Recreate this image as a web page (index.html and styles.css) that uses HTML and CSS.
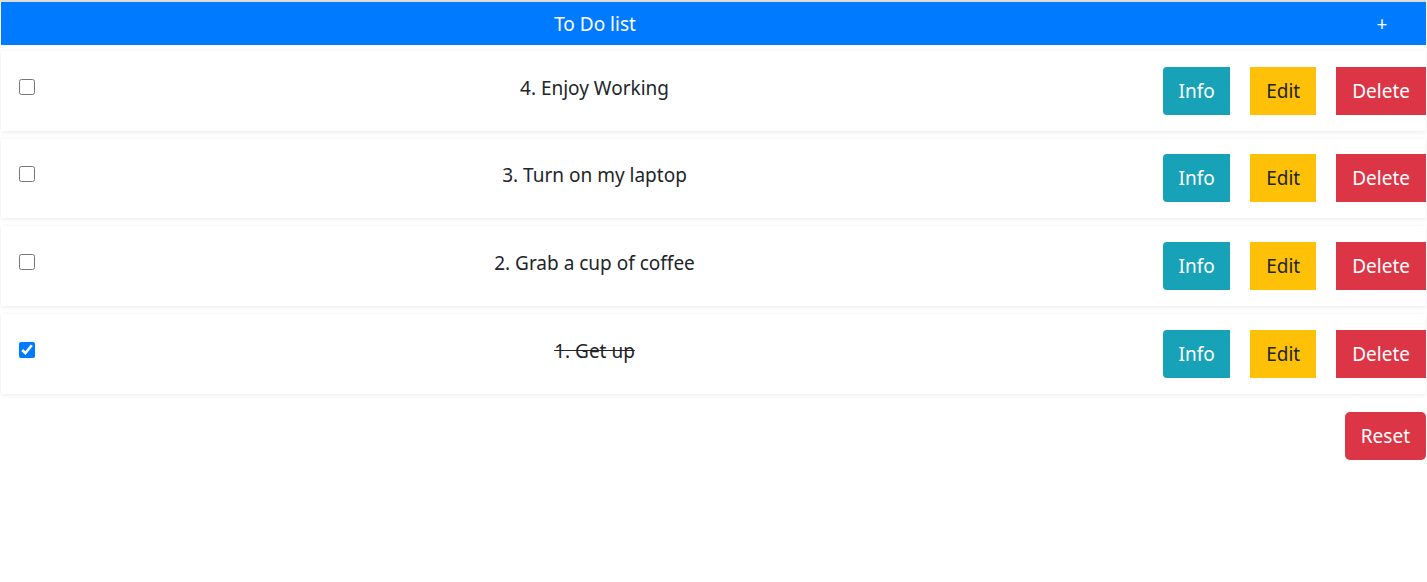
FILE: index.html
```html
<!DOCTYPE html>
<html>
<head>
<meta charset="utf-8">
<link rel="stylesheet" href="styles.css">
</head>
<body>
<div class="app">
  <div class="header">
    <div class="title">To Do list</div>
    <div class="add">+</div>
  </div>
  <div class="list">
    <div class="card">
      <div class="check"><input type="checkbox"></div>
      <div class="text">4. Enjoy Working</div>
      <div class="actions">
        <button class="btn info">Info</button>
        <button class="btn edit">Edit</button>
        <button class="btn del">Delete</button>
      </div>
    </div>
    <div class="card">
      <div class="check"><input type="checkbox"></div>
      <div class="text">3. Turn on my laptop</div>
      <div class="actions">
        <button class="btn info">Info</button>
        <button class="btn edit">Edit</button>
        <button class="btn del">Delete</button>
      </div>
    </div>
    <div class="card">
      <div class="check"><input type="checkbox"></div>
      <div class="text">2. Grab a cup of coffee</div>
      <div class="actions">
        <button class="btn info">Info</button>
        <button class="btn edit">Edit</button>
        <button class="btn del">Delete</button>
      </div>
    </div>
    <div class="card">
      <div class="check"><input type="checkbox" checked></div>
      <div class="text done">1. Get up</div>
      <div class="actions">
        <button class="btn info">Info</button>
        <button class="btn edit">Edit</button>
        <button class="btn del">Delete</button>
      </div>
    </div>
  </div>
  <div class="footer">
    <button class="btn reset">Reset</button>
  </div>
</div>
</body>
</html>
```
FILE: styles.css
```css
html, body {
  margin: 0;
  padding: 0;
  background: #fff;
}
body {
  font-family: "Noto Sans", "Open Sans", sans-serif;
  color: #212529;
  font-size: 19px;
}
.app {
  width: 1426px;
  box-sizing: border-box;
  border-top: 2px solid #dcdcdc;
  padding-left: 1px;
}
.header {
  display: flex;
  align-items: center;
  height: 43px;
  background: #007bff;
  color: #fff;
}
.title {
  width: 1188px;
  text-align: center;
}
.add {
  width: 20px;
  margin-left: 183px;
  text-align: center;
}
.list {
  display: flex;
  flex-direction: column;
  gap: 8px;
  padding-top: 6px;
}
.card {
  display: flex;
  align-items: center;
  height: 79.67px;
  background: #fff;
  box-shadow: 0 1px 5px rgba(0,0,0,0.09);
}
.check {
  width: 118px;
  padding-left: 18px;
  box-sizing: border-box;
  display: flex;
  align-items: center;
  margin-top: -8px;
}
.check input {
  width: 16px;
  height: 16px;
  margin: 0;
  accent-color: #007bff;
}
.text {
  width: 951px;
  text-align: center;
  margin-top: -6px;
}
.done {
  text-decoration: line-through;
}
.actions {
  flex: 1;
  display: flex;
  justify-content: flex-end;
  gap: 20px;
}
.btn {
  font-family: inherit;
  font-size: 19px;
  height: 48px;
  border: none;
  padding: 0 15.5px;
  color: #fff;
  cursor: pointer;
}
.info {
  background: #17a2b8;
  border-radius: 4px 0 0 4px;
}
.edit {
  background: #ffc107;
  color: #212529;
  padding: 0 16px;
}
.del {
  background: #dc3545;
  padding: 0 16px;
}
.footer {
  display: flex;
  justify-content: flex-end;
  padding-top: 18px;
}
.reset {
  background: #dc3545;
  border-radius: 5px;
  padding: 0 16px;
}
```
